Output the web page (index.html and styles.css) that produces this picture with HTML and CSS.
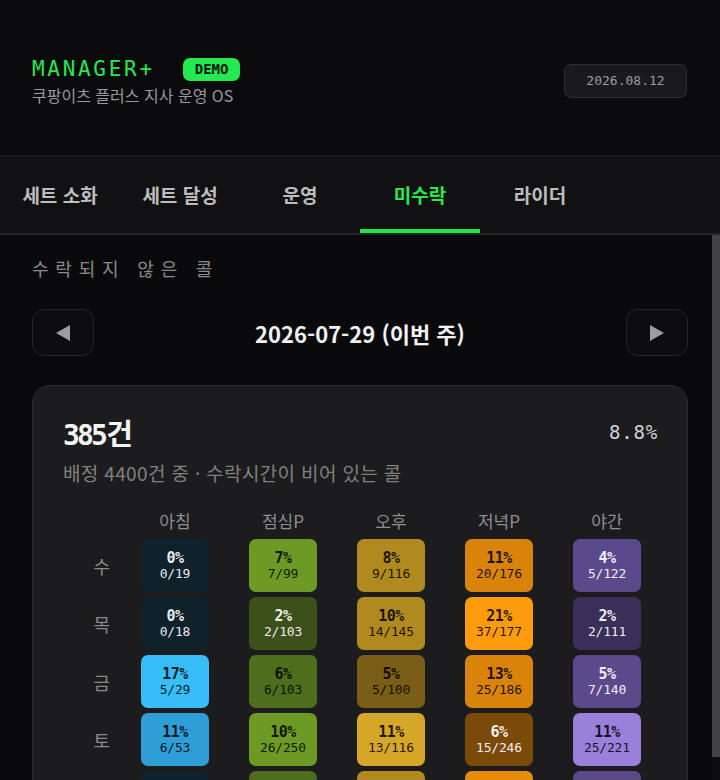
FILE: index.html
```html
<!DOCTYPE html>
<html lang="ko">
<head>
<meta charset="utf-8">
<title>MANAGER+ · 미수락</title>
<link rel="stylesheet" href="styles.css">
</head>
<body>
<div class="app">
  <header class="top">
    <div class="brand">
      <div class="brand-row">
        <span class="logo">MANAGER+</span>
        <span class="badge">DEMO</span>
      </div>
      <div class="brand-sub">쿠팡이츠 플러스 지사 운영 OS</div>
    </div>
    <div class="today">2026.08.12</div>
  </header>

  <nav class="tabs">
    <a class="tab">세트 소화</a>
    <a class="tab">세트 달성</a>
    <a class="tab">운영</a>
    <a class="tab active">미수락</a>
    <a class="tab">라이더</a>
  </nav>

  <div class="viewport">
    <main class="content">
      <p class="section-title">수락되지 않은 콜</p>

      <div class="week-nav">
        <button class="nav-btn" aria-label="이전 주">
          <svg width="14" height="16" viewBox="0 0 14 16"><path d="M0 8 L14 0 L14 16 Z" fill="#9d9d9d"/></svg>
        </button>
        <div class="week-label">2026-07-29 (이번 주)</div>
        <button class="nav-btn" aria-label="다음 주">
          <svg width="14" height="16" viewBox="0 0 14 16"><path d="M14 8 L0 0 L0 16 Z" fill="#9d9d9d"/></svg>
        </button>
      </div>

      <section class="card">
        <div class="card-head">
          <div class="total"><span class="num">385</span><span class="unit">건</span></div>
          <div class="rate">8.8%</div>
        </div>
        <p class="card-sub">배정 4400건 중 · 수락시간이 비어 있는 콜</p>

        <div class="heat">
          <div class="corner"></div>
          <div class="col-h">아침</div>
          <div class="col-h">점심P</div>
          <div class="col-h">오후</div>
          <div class="col-h">저녁P</div>
          <div class="col-h">야간</div>

          <div class="row-h">수</div>
          <div class="cell navy light"><b>0%</b><span>0/19</span></div>
          <div class="cell olive"><b>7%</b><span>7/99</span></div>
          <div class="cell mustard"><b>8%</b><span>9/116</span></div>
          <div class="cell orange"><b>11%</b><span>20/176</span></div>
          <div class="cell purple light"><b>4%</b><span>5/122</span></div>

          <div class="row-h">목</div>
          <div class="cell navy light"><b>0%</b><span>0/18</span></div>
          <div class="cell olive-dark light"><b>2%</b><span>2/103</span></div>
          <div class="cell mustard"><b>10%</b><span>14/145</span></div>
          <div class="cell orange-hot"><b>21%</b><span>37/177</span></div>
          <div class="cell purple-dark light"><b>2%</b><span>2/111</span></div>

          <div class="row-h">금</div>
          <div class="cell sky"><b>17%</b><span>5/29</span></div>
          <div class="cell olive-mid"><b>6%</b><span>6/103</span></div>
          <div class="cell mustard-dark"><b>5%</b><span>5/100</span></div>
          <div class="cell orange"><b>13%</b><span>25/186</span></div>
          <div class="cell purple light"><b>5%</b><span>7/140</span></div>

          <div class="row-h">토</div>
          <div class="cell blue"><b>11%</b><span>6/53</span></div>
          <div class="cell olive"><b>10%</b><span>26/250</span></div>
          <div class="cell gold"><b>11%</b><span>13/116</span></div>
          <div class="cell brown light"><b>6%</b><span>15/246</span></div>
          <div class="cell lavender"><b>11%</b><span>25/221</span></div>

          <div class="row-h">일</div>
          <div class="cell navy light"><b>1%</b><span>1/24</span></div>
          <div class="cell olive-mid"><b>7%</b><span>8/112</span></div>
          <div class="cell mustard"><b>9%</b><span>11/121</span></div>
          <div class="cell orange-mid"><b>14%</b><span>27/190</span></div>
          <div class="cell purple light"><b>5%</b><span>6/128</span></div>
        </div>
      </section>
    </main>
    <div class="scroll-track" aria-hidden="true"><div class="scroll-thumb"></div></div>
  </div>
</div>
</body>
</html>
```

FILE: styles.css
```css
* { box-sizing: border-box; }

html, body {
  margin: 0;
  height: 100%;
  background: #0b0b0d;
  color: #e6e6e6;
  font-family: "Noto Sans CJK KR", "Noto Sans", sans-serif;
  overflow: hidden;
}

.app {
  height: 100vh;
  display: flex;
  flex-direction: column;
}

/* ---------- header ---------- */
.top {
  flex: 0 0 157px;
  display: flex;
  justify-content: space-between;
  align-items: flex-start;
  padding: 56px 33px 0 32px;
  background: #0b0b0d;
  border-bottom: 2px solid #1a1a1d;
}

.brand-row {
  display: flex;
  align-items: center;
  height: 27px;
}

.logo {
  font-family: "DejaVu Sans Mono", monospace;
  font-size: 21px;
  letter-spacing: 2.7px;
  color: #27e84f;
  line-height: 1;
}

.badge {
  margin-left: 28px;
  height: 23px;
  padding: 0 12px;
  border-radius: 7px;
  background: #22ea50;
  color: #07140a;
  font-family: "DejaVu Sans Mono", monospace;
  font-weight: bold;
  font-size: 14px;
  line-height: 23px;
}

.brand-sub {
  margin-top: 1px;
  font-size: 16px;
  line-height: 22px;
  color: #9a9a9a;
}

.today {
  margin-top: 8px;
  width: 123px;
  height: 34px;
  border: 1.5px solid #2d2d31;
  border-radius: 7px;
  background: #1a1a1d;
  color: #9b9b9b;
  font-family: "DejaVu Sans Mono", monospace;
  font-size: 13px;
  line-height: 31px;
  text-align: center;
}

/* ---------- tabs ---------- */
.tabs {
  flex: 0 0 78px;
  display: flex;
  background: #111113;
  border-bottom: 2px solid #242427;
}

.tab {
  width: 120px;
  display: flex;
  align-items: center;
  justify-content: center;
  font-size: 19px;
  font-weight: bold;
  color: #bdbdbd;
  border-bottom: 4px solid transparent;
  padding-top: 3px;
  cursor: pointer;
}

.tab.active {
  color: #2be84d;
  border-bottom-color: #24e24a;
}

/* ---------- scroll area ---------- */
.viewport {
  flex: 1 1 auto;
  min-height: 0;
  display: flex;
  background: #0a0a0c;
}

.content {
  flex: 1 1 auto;
  min-width: 0;
  overflow-y: auto;
  scrollbar-width: none;
  padding: 21px 24px 0 32px;
}

.scroll-track {
  flex: 0 0 8px;
  background: #0d0d0f;
}

.scroll-thumb {
  height: 522px;
  background: #434345;
}

.section-title {
  margin: 0;
  font-size: 18px;
  line-height: 24px;
  letter-spacing: 6.8px;
  color: #8a8a8a;
}

.week-nav {
  margin-top: 29px;
  display: flex;
  align-items: center;
  justify-content: space-between;
}

.nav-btn {
  width: 62px;
  height: 47px;
  border: 1.5px solid #252528;
  border-radius: 12px;
  background: #0d0d0f;
  display: flex;
  align-items: center;
  justify-content: center;
  padding: 0;
  cursor: pointer;
}

.week-label {
  font-size: 22px;
  font-weight: bold;
  color: #f2f2f2;
}

/* ---------- card ---------- */
.card {
  margin-top: 29px;
  background: #1c1c1e;
  border: 1px solid #2b2b2e;
  border-radius: 18px;
  padding: 28px 29px 24px 30px;
}

.card-head {
  display: flex;
  justify-content: space-between;
  align-items: center;
  height: 36px;
}

.total {
  display: flex;
  align-items: baseline;
  color: #f4f4f4;
}

.total .num {
  font-family: "DejaVu Sans Mono", monospace;
  font-weight: bold;
  font-size: 28px;
  letter-spacing: -2.8px;
}

.total .unit {
  margin-left: 1px;
  font-size: 29px;
  font-weight: bold;
}

.rate {
  font-family: "DejaVu Sans Mono", monospace;
  font-size: 19px;
  letter-spacing: 0.8px;
  color: #d2d2d2;
}

.card-sub {
  margin: 11px 0 0;
  font-size: 19px;
  line-height: 24px;
  letter-spacing: 0.35px;
  color: #808080;
}

.heat {
  margin-top: 23px;
  display: grid;
  grid-template-columns: 38px repeat(5, 68px);
  grid-template-rows: 26px;
  grid-auto-rows: 53px;
  column-gap: 40px;
  row-gap: 5px;
}

.col-h {
  text-align: center;
  font-size: 17px;
  line-height: 26px;
  color: #8e8e8e;
}

.row-h {
  display: flex;
  align-items: center;
  justify-content: flex-end;
  margin-right: -9px;
  font-size: 18px;
  color: #8a8a8a;
}

.cell {
  border-radius: 7px;
  display: flex;
  flex-direction: column;
  align-items: center;
  justify-content: center;
  font-family: "DejaVu Sans Mono", monospace;
  color: rgba(0, 0, 0, 0.86);
}

.cell b {
  font-size: 15px;
  line-height: 16px;
  letter-spacing: -0.5px;
}

.cell span {
  font-size: 13px;
  line-height: 16px;
  letter-spacing: -0.2px;
}

.cell.light { color: rgba(255, 255, 255, 0.93); }

.navy        { background: #0f222c; }
.sky         { background: #38bdf8; }
.blue        { background: #2f9ed6; }
.olive       { background: #6c9a24; }
.olive-mid   { background: #4f6e1d; }
.olive-dark  { background: #3c5119; }
.mustard     { background: #b08a1f; }
.mustard-dark{ background: #7b5e15; }
.gold        { background: #d6a628; }
.orange      { background: #d9830a; }
.orange-mid  { background: #e88b0b; }
.orange-hot  { background: #ff9b0d; }
.brown       { background: #7a4a08; }
.purple      { background: #5b4a8b; }
.purple-dark { background: #3a2f58; }
.lavender    { background: #9a80da; }
```
